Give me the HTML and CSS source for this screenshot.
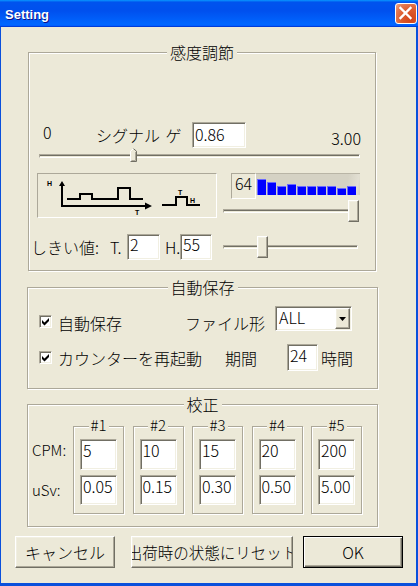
FILE: index.html
```html
<!DOCTYPE html>
<html lang="ja">
<head>
<meta charset="utf-8">
<title>Setting</title>
<link rel="stylesheet" href="styles.css">
</head>
<body>
<div class="window">
  <div class="titlebar">
    <span class="title">Setting</span>
    <div class="close">
      <svg width="20" height="19" viewBox="0 0 20 19"><path d="M4.5 4 L14.5 14 M14.5 4 L4.5 14" stroke="#fff" stroke-width="2.4" stroke-linecap="square" fill="none"/></svg>
    </div>
  </div>
  <div class="client">
    <div class="group g1">
      <div class="gtitle">感度調節</div>
      <div class="row r1">
        <span class="zero">0</span>
        <span class="siglabel">シグナル ゲ</span>
        <div class="edit e-gain">0.86</div>
        <span class="maxval">3.00</span>
      </div>
      <div class="slider s1">
        <div class="track"></div>
        <svg class="pthumb" style="left:91px" width="7" height="14" viewBox="0 0 7 14">
          <path d="M0 14 V3 L3.5 0 L7 3 V14 Z" fill="#ece9d8"/>
          <path d="M0.5 13.5 V3.2 L3.5 0.7" stroke="#fff" fill="none"/>
          <path d="M3.5 0.7 L6.5 3.2 V13.5 H0.5" stroke="#716f64" fill="none"/>
          <path d="M5.5 4 V12.5 H1.5" stroke="#aca899" fill="none"/>
        </svg>
      </div>
      <div class="row r2">
        <div class="diagram">
          <svg width="178" height="43" viewBox="0 0 178 43">
            <g fill="none" stroke="#000" stroke-width="2">
              <path d="M24 10 V32 H108"/>
              <path d="M29 25 H42 V20 H54 V25 H80 V14 H92 V25 H105"/>
              <path d="M124 31 H138 V23 H149 V31 H162"/>
            </g>
            <path d="M24 7 L27 12 H21 Z M114 32 L107 28.5 V35.5 Z" fill="#000"/>
            <text class="dl" x="9" y="12">H</text>
            <text class="dl" x="97" y="41">T</text>
            <text class="dl" x="140" y="21">T</text>
            <text class="dl" x="152" y="29">H</text>
          </svg>
        </div>
        <div class="rightcol">
          <div class="hist">
            <div class="hnum">64</div>
            <div class="bars">
              <i style="height:16px"></i>
              <i style="height:13px"></i>
              <i style="height:9px"></i>
              <i style="height:11px"></i>
              <i style="height:9px"></i>
              <i style="height:9px"></i>
              <i style="height:9px"></i>
              <i style="height:9px"></i>
              <i style="height:7px"></i>
              <i style="height:9px"></i>
            </div>
          </div>
          <div class="slider s2">
            <div class="track"></div>
            <div class="thumb" style="left:125px"></div>
          </div>
        </div>
      </div>
      <div class="row r3">
        <span class="th-label">しきい値:</span>
        <span class="t-lbl">T.</span>
        <div class="edit e-t">2</div>
        <span class="h-lbl">H.</span>
        <div class="edit e-h">55</div>
        <div class="slider s3">
          <div class="track"></div>
          <div class="thumb" style="left:34px"></div>
        </div>
      </div>
    </div>

    <div class="group g2">
      <div class="gtitle">自動保存</div>
      <div class="row a1">
        <div class="chk-item w1">
          <span class="chk"><svg width="11" height="11" viewBox="0 0 11 11"><path d="M2 4 L4.5 6.5 L9 2 V5 L4.5 9.5 L2 7 Z" fill="#000"/></svg></span>
          <span class="chk-text">自動保存</span>
        </div>
        <span class="ftype">ファイル形</span>
        <div class="combo">
          <span class="combo-val">ALL</span>
          <span class="dd"><svg width="7" height="4" viewBox="0 0 7 4"><path d="M0 0 H7 L3.5 4 Z" fill="#000"/></svg></span>
        </div>
      </div>
      <div class="row a2">
        <div class="chk-item w2">
          <span class="chk"><svg width="11" height="11" viewBox="0 0 11 11"><path d="M2 4 L4.5 6.5 L9 2 V5 L4.5 9.5 L2 7 Z" fill="#000"/></svg></span>
          <span class="chk-text">カウンターを再起動</span>
        </div>
        <span class="period">期間</span>
        <div class="edit e24">24</div>
        <span class="hours">時間</span>
      </div>
    </div>

    <div class="group g3">
      <div class="gtitle">校正</div>
      <div class="cal">
        <div class="cal-labels">
          <span class="cl-cpm">CPM:</span>
          <span class="cl-usv">uSv:</span>
        </div>
        <div class="subs">
          <div class="sub"><div class="stitle">#1</div><div class="edit cpm">5</div><div class="edit usvv">0.05</div></div>
          <div class="sub"><div class="stitle">#2</div><div class="edit cpm">10</div><div class="edit usvv">0.15</div></div>
          <div class="sub"><div class="stitle">#3</div><div class="edit cpm">15</div><div class="edit usvv">0.30</div></div>
          <div class="sub"><div class="stitle">#4</div><div class="edit cpm">20</div><div class="edit usvv">0.50</div></div>
          <div class="sub"><div class="stitle">#5</div><div class="edit cpm">200</div><div class="edit usvv">5.00</div></div>
        </div>
      </div>
    </div>

    <div class="buttons">
      <div class="btn b-cancel">キャンセル</div>
      <div class="btn b-reset"><span class="reset-text">出荷時の状態にリセット</span></div>
      <div class="btn b-ok">OK</div>
    </div>
  </div>
</div>
</body>
</html>
```

FILE: styles.css
```css
* { box-sizing: border-box; }
html, body { margin: 0; padding: 0; }
body {
  width: 418px;
  height: 586px;
  overflow: hidden;
  font-family: "Noto Sans CJK JP", "Noto Sans", sans-serif;
  font-weight: 300;
  font-size: 16px;
  line-height: 16px;
  color: #000;
  background: #0a50dc;
}
.window {
  width: 418px;
  height: 586px;
  background: #0a50dc;
  display: flex;
  flex-direction: column;
}
.titlebar {
  height: 27px;
  flex: none;
  display: flex;
  justify-content: space-between;
  align-items: flex-start;
  padding-left: 5px;
  background: linear-gradient(180deg, #0997ff, #0053ee 8%, #0050ee 40%, #0066ff 88%, #0066ff 93%, #005bff 95%, #003dd7 96%, #003dd7);
}
.title {
  font: bold 13px/15px "Liberation Sans", "DejaVu Sans", sans-serif;
  color: #fff;
  margin-top: 7px;
  text-shadow: 1px 1px #0f1089;
}
.close {
  width: 22px;
  height: 21px;
  margin-top: 3px;
  margin-right: 1px;
  border: 1px solid #fff;
  border-radius: 3px;
  background: radial-gradient(circle at 75% 80%, #d2441a 0, #dd5a2c 45%, #e47a52 75%, #f0a888 100%);
  display: flex;
}
.client {
  flex: 1;
  margin: 0 2px 3px 1px;
  background: #ece9d8;
  display: flex;
  flex-direction: column;
  align-items: flex-start;
}

/* group boxes */
.group, .sub {
  position: relative;
  border: 1px solid #aca899;
  box-shadow: inset 1px 1px #fff, 1px 1px #fff;
}
.gtitle, .stitle {
  position: absolute;
  top: -9px;
  left: 50%;
  transform: translateX(-50%);
  background: #ece9d8;
  padding: 0 3px;
  white-space: nowrap;
  line-height: 16px;
}
.stitle { top: -10px; padding: 0 2px; font-size: 15px; }

.row { display: flex; }

/* edits */
.edit {
  background: #fff;
  border: 1px solid;
  border-color: #aca899 #fff #fff #aca899;
  box-shadow: inset 1px 1px #716f64, inset -1px -1px #f1efe2;
  display: flex;
  align-items: center;
  padding-left: 2px;
  white-space: nowrap;
}

/* group 1 */
.g1 { margin: 25px 0 0 27px; width: 348px; padding: 69px 0 10px 0; }
.r1 { height: 26px; align-items: center; width: 100%; }
.zero { margin-left: 14px; width: 53px; align-self: flex-start; margin-top: 2px; }
.siglabel { width: 96px; word-spacing: 2px; white-space: nowrap; }
.e-gain { width: 54px; height: 26px; padding-bottom: 3px; }
.maxval { margin-left: auto; margin-right: 14px; align-self: flex-end; margin-bottom: 2px; }

.slider { position: relative; }
.track {
  height: 4px;
  border: 1px solid;
  border-color: #aca899 #fff #fff #aca899;
  background: linear-gradient(#716f64 0 1px, #ece9d8 1px);
}
.s1 { margin-left: 10px; width: 321px; height: 14px; padding-top: 6px; }
.pthumb { position: absolute; top: 0; display: block; }
.s2, .s3 { width: 135px; height: 22px; display: flex; flex-direction: column; justify-content: center; }
.thumb {
  position: absolute;
  top: 0;
  width: 11px;
  height: 22px;
  background: #ece9d8;
  border: 1px solid;
  border-color: #fff #716f64 #716f64 #fff;
  box-shadow: inset -1px -1px #aca899, inset 1px 1px #f1efe2;
}

.r2 { margin-top: 11px; align-items: flex-start; }
.diagram {
  margin-left: 8px;
  width: 180px;
  height: 45px;
  border: 1px solid;
  border-color: #aca899 #fff #fff #aca899;
}
.diagram svg { display: block; }
.dl { font: bold 7px "Liberation Sans", "DejaVu Sans", sans-serif; }
.rightcol { margin-left: 6px; width: 137px; display: flex; flex-direction: column; }
.hist { margin-left: 8px; width: 129px; height: 26px; display: flex; align-items: flex-start; }
.hnum {
  width: 25px;
  height: 26px;
  border: 1px solid;
  border-color: #aca899 #fff #fff #aca899;
  padding: 0 0 6px 3px;
  display: flex;
  align-items: center;
}
.bars {
  width: 104px;
  height: 22px;
  border-top: 1px solid #b9b5a6;
  background: linear-gradient(100deg, #d5d2c4 86%, #e2dfd2 96%, #d5d2c4 100%);
  display: flex;
  align-items: flex-end;
  gap: 1px;
  padding-left: 1px;
}
.bars i {
  display: block;
  width: 9px;
  background: #0000ff;
  box-shadow: inset 1px 1px #6a6aff;
}
.s2 { margin-top: 1px; }

.r3 { margin-top: 12px; height: 26px; align-items: center; }
.th-label { margin-left: 2px; width: 79px; white-space: nowrap; }
.t-lbl { width: 17px; }
.h-lbl { width: 20px; padding-left: 5px; }
.e-t { width: 33px; height: 26px; padding-bottom: 6px; }
.e-h { width: 32px; height: 26px; padding-bottom: 6px; }
.s3 { margin-left: 11px; }

/* group 2 */
.g2 { margin: 16px 0 0 26px; width: 351px; padding: 18px 0 17px 0; }
.a1 { height: 25px; align-items: flex-end; }
.a2 { margin-top: 13px; height: 27px; align-items: center; }
.chk-item { display: flex; margin-left: 11px; white-space: nowrap; }
.a1 .chk-item { align-items: flex-end; }
.a2 .chk-item { align-items: center; }
.w1 { width: 146px; }
.w2 { width: 186px; }
.chk {
  width: 13px;
  height: 13px;
  flex: none;
  background: #fff;
  border: 1px solid;
  border-color: #aca899 #fff #fff #aca899;
  box-shadow: inset 1px 1px #716f64, inset -1px -1px #f1efe2;
}
.chk svg { display: block; }
.a1 .chk { margin-bottom: 3px; }
.chk-text { margin-left: 6px; }
.ftype { width: 90px; white-space: nowrap; }
.combo {
  width: 77px;
  height: 25px;
  background: #fff;
  border: 1px solid;
  border-color: #aca899 #fff #fff #aca899;
  box-shadow: inset 1px 1px #716f64, inset -1px -1px #f1efe2;
  display: flex;
  align-items: center;
}
.combo-val { flex: 1; padding: 0 0 3px 3px; }
.dd {
  width: 15px;
  height: 21px;
  margin-right: 1px;
  background: #ece9d8;
  border: 1px solid;
  border-color: #fff #716f64 #716f64 #fff;
  box-shadow: inset -1px -1px #aca899, inset 1px 1px #f1efe2;
  display: flex;
  align-items: center;
  justify-content: center;
  padding-top: 1px;
}
.dd svg { display: block; }
.period { width: 62px; }
.e24 { width: 31px; height: 27px; padding-bottom: 5px; }
.hours { margin-left: 3px; }

/* group 3 */
.g3 { margin: 15px 0 0 26px; width: 351px; padding: 21px 0 12px 0; }
.cal { display: flex; }
.cal-labels {
  width: 45px;
  padding: 16px 0 0 4px;
  display: flex;
  flex-direction: column;
  font-size: 15px;
}
.cl-usv { margin-top: 24px; }
.subs { display: flex; gap: 8.5px; }
.sub {
  width: 51px;
  height: 88px;
  padding: 12px 0 0 6px;
  display: flex;
  flex-direction: column;
  gap: 5px;
}
.sub .edit { width: 37px; }
.cpm { height: 31px; padding-bottom: 9px; }
.usvv { height: 30px; padding-bottom: 8px; }

/* buttons */
.buttons { margin: 9px 0 0 14px; display: flex; }
.btn {
  height: 32px;
  background: #ece9d8;
  border: 1px solid;
  border-color: #fff #716f64 #716f64 #fff;
  box-shadow: inset -1px -1px #aca899, inset 1px 1px #f1efe2;
  display: flex;
  align-items: center;
  justify-content: center;
  white-space: nowrap;
}
.b-cancel { width: 100px; }
.b-reset { width: 162px; margin-left: 16px; overflow: hidden; }
.reset-text { flex: none; font-size: 15.5px; }
.b-ok {
  width: 100px;
  margin-left: 10px;
  border-color: #000;
  box-shadow: inset 1px 1px #fff, inset -1px -1px #716f64, inset -2px -2px #aca899;
}
```
